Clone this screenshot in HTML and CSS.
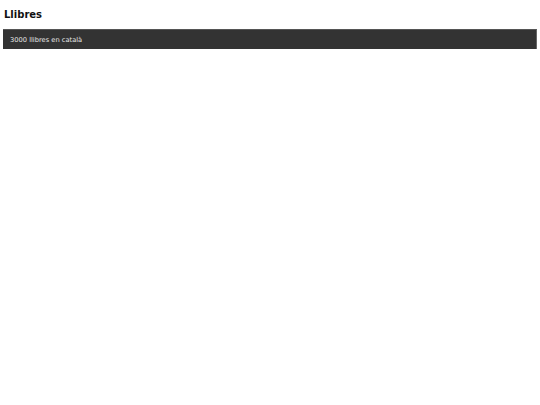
FILE: index.html
```html
<!DOCTYPE html>
<html lang="ca">
<head>
<meta charset="utf-8">
<title>Llibres</title>
<link rel="stylesheet" href="styles.css">
</head>
<body>
<h1 class="title">Llibres</h1>
<div class="bar"><span class="bar-text">3000 llibres en català</span></div>
</body>
</html>
```
FILE: styles.css
```css
html, body { margin: 0; padding: 0; background: #fff; }
body { padding: 9px 3px; font-family: "DejaVu Sans", sans-serif; }
.title { margin: 0 0 8px 1px; font-size: 10px; font-weight: bold; color: #111; line-height: 12px; }
.bar { background: #333; border-top: 1px solid #555; border-right: 1px solid #666; height: 19px; display: flex; align-items: center; padding-left: 7px; }
.bar-text { color: #e6e6e6; font-size: 6.7px; }
```
